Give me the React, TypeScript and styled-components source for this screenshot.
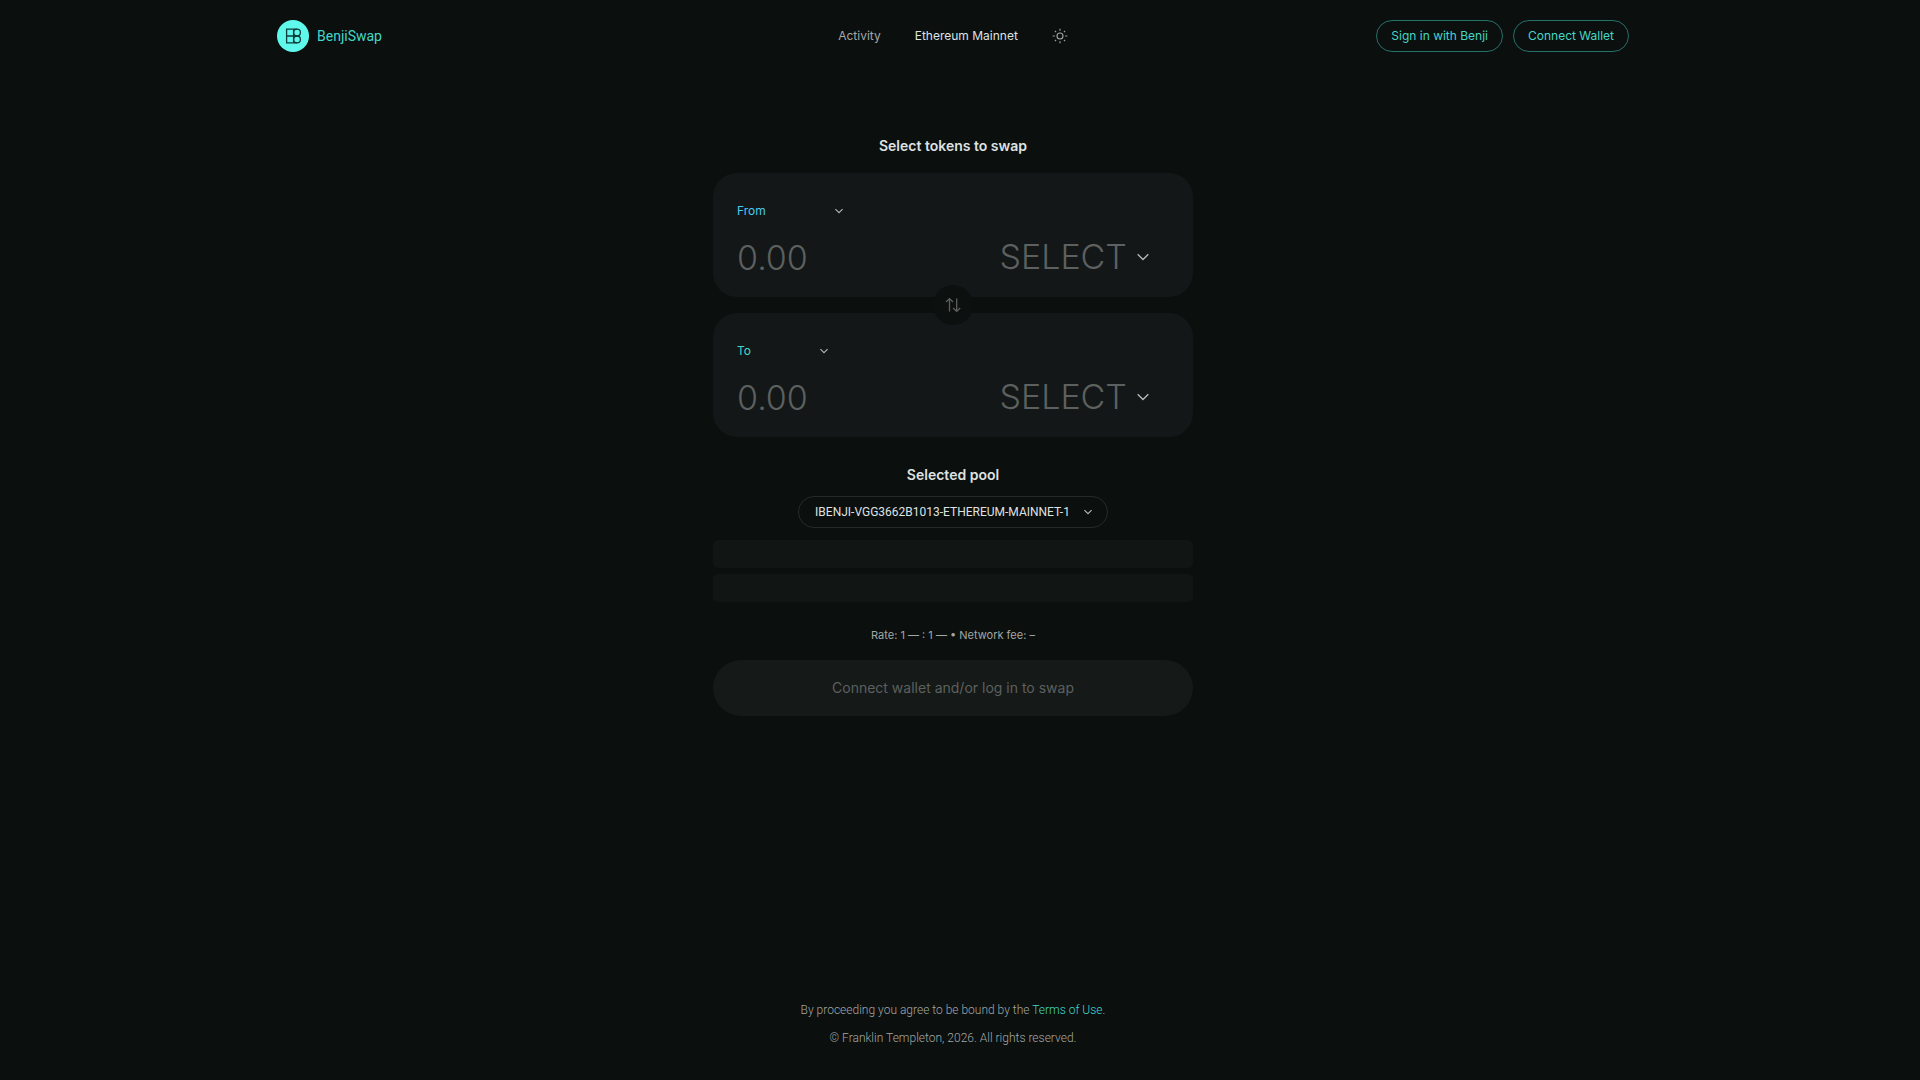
import React from "react";
import styled, { createGlobalStyle } from "styled-components";

const color = {
  bg: "#0b0f0e",
  card: "#131718",
  bar: "#111514",
  action: "#151918",
  teal: "#44d7c9",
  blue: "#4cc9f0",
  text: "#dfe2e1",
  soft: "#a3a7a6",
  faint: "#5c605f",
};

const GlobalStyle = createGlobalStyle`
  *, *::before, *::after { box-sizing: border-box; }
  body {
    margin: 0;
    padding-right: 14px;
    background: ${color.bg};
    color: ${color.text};
    font-family: Inter, "Liberation Sans", sans-serif;
    font-size: 12px;
    line-height: 20px;
  }
  button, input, select { font: inherit; color: inherit; margin: 0; }
`;

const Page = styled.div`
  min-height: 100vh;
  display: flex;
  flex-direction: column;
`;

const Header = styled.header`
  width: 100%;
  max-width: 1400px;
  margin: 0 auto;
  padding: 20px 24px;
  display: grid;
  grid-template-columns: 1fr auto 1fr;
  align-items: center;
`;

const Brand = styled.a`
  display: flex;
  align-items: center;
  gap: 8px;
  justify-self: start;
  color: ${color.teal};
  font-family: Roboto, sans-serif;
  font-size: 14px;
  text-decoration: none;
`;

const Nav = styled.nav`
  display: flex;
  align-items: center;
  gap: 34px;
`;

const NavLink = styled.a<{ $active?: boolean }>`
  color: ${(p) => (p.$active ? color.text : color.soft)};
  text-decoration: none;
`;

const IconButton = styled.button`
  display: flex;
  padding: 0;
  border: 0;
  background: none;
  color: ${color.soft};
`;

const Actions = styled.div`
  display: flex;
  gap: 10px;
  justify-self: end;
`;

const OutlineButton = styled.button`
  height: 32px;
  padding: 0 14px;
  border: 1px solid #26706a;
  border-radius: 16px;
  background: none;
  color: ${color.teal};
`;

const Main = styled.main`
  width: 100%;
  max-width: 480px;
  margin: 0 auto;
  padding-top: 64px;
  flex: 1;
  display: flex;
  flex-direction: column;
`;

const Title = styled.h2`
  margin: 0;
  font-size: 14px;
  font-weight: 600;
  line-height: 20px;
  text-align: center;
`;

const Cards = styled.div`
  position: relative;
  display: grid;
  gap: 16px;
  margin: 17px 0 28px;
`;

const Card = styled.section`
  padding: 24px 24px 22px;
  border-radius: 24px;
  background: ${color.card};
  display: grid;
  gap: 14px;
`;

const AmountRow = styled.div`
  display: flex;
  align-items: center;
  justify-content: space-between;
  padding-right: 20px;
`;

const AmountInput = styled.input`
  width: 200px;
  height: 36px;
  padding: 0;
  border: 0;
  outline: 0;
  background: none;
  font-size: 34px;
  font-weight: 300;
  &::placeholder { color: ${color.faint}; opacity: 1; }
`;

const SelectBox = styled.label<{ $width?: number }>`
  display: grid;
  align-items: center;
  justify-self: start;
  width: ${(p) => (p.$width ? `${p.$width}px` : "auto")};
  > * { grid-area: 1 / 1; }
  > svg { justify-self: end; pointer-events: none; }
`;

const SideSelect = styled.select<{ $tint: string }>`
  appearance: none;
  height: 28px;
  padding: 0;
  border: 0;
  background: none;
  color: ${(p) => p.$tint};
`;

const TokenSelect = styled.select`
  appearance: none;
  field-sizing: content;
  height: 36px;
  padding: 0 22px 0 0;
  border: 0;
  background: none;
  color: ${color.faint};
  font-size: 34px;
  font-weight: 300;
  line-height: 36px;
`;

const SwapButton = styled.button`
  position: absolute;
  top: 50%;
  left: 50%;
  transform: translate(-50%, -50%);
  width: 40px;
  height: 40px;
  padding: 0;
  display: grid;
  place-items: center;
  border: 0;
  border-radius: 50%;
  background: #0c100f;
  color: ${color.faint};
`;

const PoolBox = styled(SelectBox)`
  align-self: center;
  margin: 11px 0 12px;
  > svg { margin-right: 16px; color: ${color.soft}; }
`;

const PoolSelect = styled.select`
  appearance: none;
  field-sizing: content;
  height: 32px;
  padding: 0 37px 0 16px;
  border: 1px solid #252928;
  border-radius: 16px;
  background: none;
  font-family: Roboto, sans-serif;
  font-size: 12px;
`;

const Bars = styled.div`
  display: grid;
  gap: 6px;
`;

const Bar = styled.div`
  height: 28px;
  border-radius: 5px;
  background: ${color.bar};
`;

const Rate = styled.p`
  margin: 23px 0 15px;
  color: ${color.soft};
  font-size: 11px;
  text-align: center;
`;

const SubmitButton = styled.button`
  height: 56px;
  border: 0;
  border-radius: 28px;
  background: ${color.action};
  font-size: 14px;
  &:disabled { color: ${color.faint}; }
`;

const Footer = styled.footer`
  padding-bottom: 28px;
  color: ${color.soft};
  font-family: Roboto, sans-serif;
  font-size: 12px;
  font-weight: 300;
  line-height: 28px;
  text-align: center;
  p { margin: 0; }
  a { color: ${color.teal}; text-decoration: none; }
`;

function Logo() {
  return (
    <svg width="32" height="32" viewBox="0 0 32 32" aria-hidden="true">
      <circle cx="16" cy="16" r="16" fill="#5ff9ec" />
      <g fill="none" stroke="#0d3d3a" strokeWidth="1.3">
        <path d="M20 9.2H9.6v13.6H20M9.6 16H20M16.6 9.2v13.6" />
        <circle cx="20" cy="12.6" r="3.4" />
        <circle cx="20" cy="19.4" r="3.4" />
      </g>
    </svg>
  );
}

function Sun() {
  return (
    <svg width="16" height="16" viewBox="0 0 16 16" fill="none" stroke="currentColor" strokeWidth="1.1" aria-hidden="true">
      <circle cx="8" cy="8" r="3" />
      <path d="M8 .7v2.1M8 13.2v2.1M.7 8h2.1M13.2 8h2.1M2.9 2.9l1.2 1.2M11.9 11.9l1.2 1.2M2.9 13.1l1.2-1.2M11.9 4.1l1.2-1.2" />
    </svg>
  );
}

function Chevron({ large }: { large?: boolean }) {
  return (
    <svg width={large ? 12 : 8} height={large ? 8 : 6} viewBox={large ? "0 0 12 8" : "0 0 8 6"} fill="none" stroke="#b4b8b7" strokeWidth={large ? 1.4 : 1.1} aria-hidden="true">
      <path d={large ? "M.7 1.3 6 6.5l5.3-5.2" : "M.4 1.2 4 4.7l3.6-3.5"} />
    </svg>
  );
}

function SwapIcon() {
  return (
    <svg width="16" height="16" viewBox="0 0 16 16" fill="none" stroke="currentColor" strokeWidth="1.3" aria-hidden="true">
      <path d="M4.5 14.5V1.8M1 5l3.5-3.4L8 5M11.7 1.5v12.7M8.2 11l3.5 3.4 3.5-3.4" />
    </svg>
  );
}

function TokenCard({ side, tint, width }: { side: string; tint: string; width: number }) {
  return (
    <Card>
      <SelectBox $width={width}>
        <SideSelect $tint={tint} aria-label={`${side} account`}>
          <option>{side}</option>
        </SideSelect>
        <Chevron />
      </SelectBox>
      <AmountRow>
        <AmountInput placeholder="0.00" inputMode="decimal" aria-label={`${side} amount`} />
        <SelectBox>
          <TokenSelect aria-label={`${side} token`}>
            <option>SELECT</option>
          </TokenSelect>
          <Chevron large />
        </SelectBox>
      </AmountRow>
    </Card>
  );
}

export default function App() {
  return (
    <Page>
      <GlobalStyle />
      <Header>
        <Brand href="#">
          <Logo />
          BenjiSwap
        </Brand>
        <Nav>
          <NavLink href="#activity">Activity</NavLink>
          <NavLink href="#network" $active>Ethereum Mainnet</NavLink>
          <IconButton type="button" aria-label="Toggle theme"><Sun /></IconButton>
        </Nav>
        <Actions>
          <OutlineButton type="button">Sign in with Benji</OutlineButton>
          <OutlineButton type="button">Connect Wallet</OutlineButton>
        </Actions>
      </Header>
      <Main>
        <Title>Select tokens to swap</Title>
        <Cards>
          <TokenCard side="From" tint={color.blue} width={106} />
          <TokenCard side="To" tint={color.teal} width={91} />
          <SwapButton type="button" aria-label="Switch tokens"><SwapIcon /></SwapButton>
        </Cards>
        <Title>Selected pool</Title>
        <PoolBox>
          <PoolSelect aria-label="Selected pool">
            <option>IBENJI-VGG3662B1013-ETHEREUM-MAINNET-1</option>
          </PoolSelect>
          <Chevron />
        </PoolBox>
        <Bars>
          <Bar />
          <Bar />
        </Bars>
        <Rate>Rate: 1 — : 1 — • Network fee: –</Rate>
        <SubmitButton type="button" disabled>Connect wallet and/or log in to swap</SubmitButton>
      </Main>
      <Footer>
        <p>By proceeding you agree to be bound by the <a href="#terms">Terms of Use.</a></p>
        <p>© Franklin Templeton, 2026. All rights reserved.</p>
      </Footer>
    </Page>
  );
}
